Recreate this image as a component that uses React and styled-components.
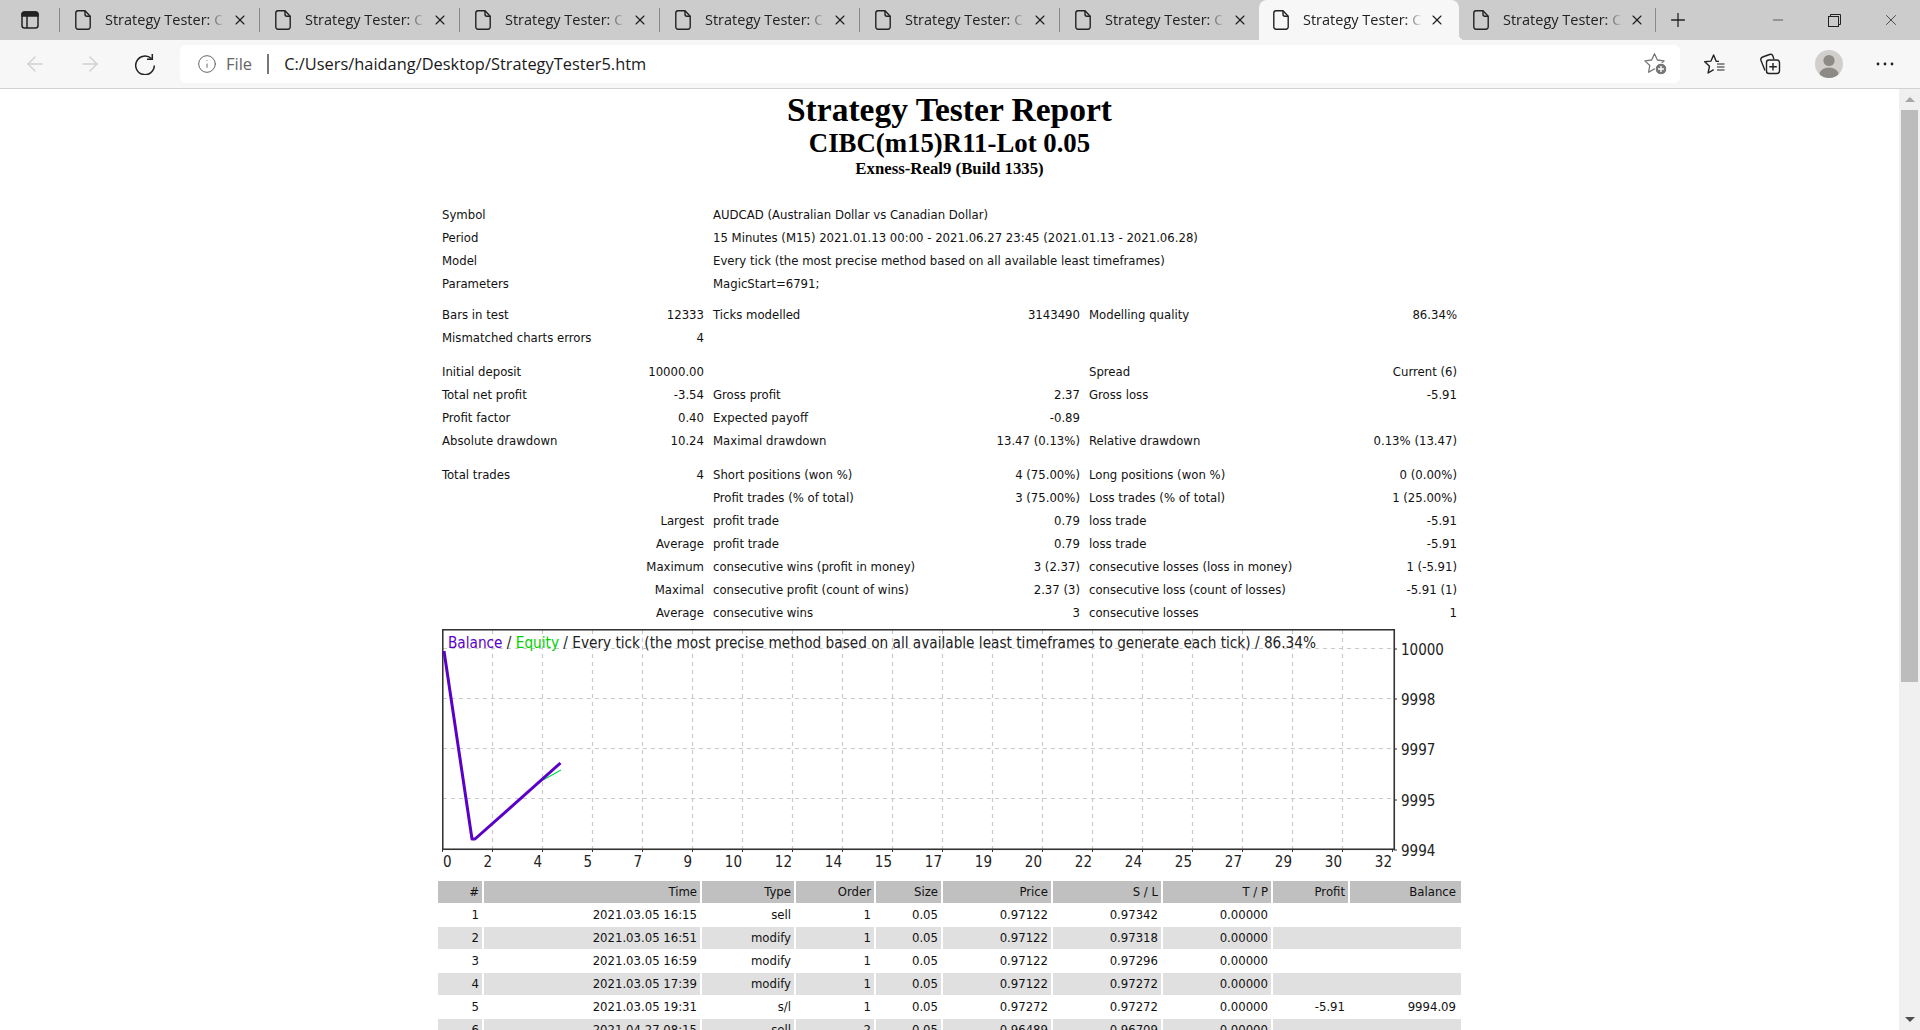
import styled, { createGlobalStyle } from "styled-components";
import { ArrowLeft, ArrowRight, Info, Minus, Plus, X } from "lucide-react";

const GlobalStyle = createGlobalStyle`
  html, body {
    margin: 0;
    padding: 0;
    height: 100%;
    overflow: hidden;
    background: #fff;
  }
`;

const uiFont = `"Open Sans", "Noto Sans", sans-serif`;
const reportFont = `"DejaVu Sans", sans-serif`;

/* ---------- browser chrome ---------- */

const Browser = styled.div`
  display: flex;
  flex-direction: column;
  height: 100vh;
  overflow: hidden;
`;

const TabStrip = styled.div`
  display: flex;
  align-items: stretch;
  height: 40px;
  background: #cccccc;
  flex-shrink: 0;
`;

const StripButton = styled.div`
  display: flex;
  align-items: center;
  justify-content: center;
  width: ${({ $w }) => $w}px;
  flex-shrink: 0;
  color: #222;
`;

const Spacer = styled.div`
  flex: 1;
`;

const Tab = styled.div`
  position: relative;
  display: flex;
  align-items: center;
  width: ${({ $last }) => ($last ? 196 : 200)}px;
  padding-left: ${({ $tight }) => ($tight ? 14 : 16)}px;
  box-sizing: border-box;
  flex-shrink: 0;
  background: ${({ $active }) => ($active ? "#f7f7f7" : "transparent")};
  border-radius: ${({ $active }) => ($active ? "8px 8px 0 0" : "0")};

  &::before {
    content: "";
    display: ${({ $noSep }) => ($noSep ? "none" : "block")};
    position: absolute;
    left: 0;
    top: 8px;
    bottom: 8px;
    width: 1px;
    background: #8a8a8a;
  }

  &::after {
    content: "";
    display: ${({ $active }) => ($active ? "block" : "none")};
    position: absolute;
    right: -6px;
    bottom: 0;
    width: 6px;
    height: 6px;
    background: radial-gradient(circle at 100% 0, transparent 6px, #f7f7f7 6.5px);
  }
`;

const TabTitle = styled.span`
  width: 119px;
  margin-left: 14px;
  padding-bottom: 2px;
  font: 14.5px ${uiFont};
  color: #222;
  white-space: nowrap;
  -webkit-mask-image: linear-gradient(to right, #000 86%, transparent 100%);
  mask-image: linear-gradient(to right, #000 86%, transparent 100%);
`;

const TabClose = styled.span`
  display: flex;
  margin-left: ${({ $tight }) => ($tight ? 7 : 8)}px;
  color: #1c1c1c;
`;

const EndLine = styled.div`
  width: 1px;
  margin: 8px 0;
  background: #8a8a8a;
`;

const Toolbar = styled.div`
  display: flex;
  align-items: center;
  height: 48px;
  padding-left: 7px;
  background: #f7f7f7;
  border-bottom: 1px solid #d2d2d2;
  flex-shrink: 0;
`;

const ToolButton = styled.div`
  display: flex;
  align-items: center;
  justify-content: center;
  width: 55px;
  height: 40px;
  flex-shrink: 0;
  margin-left: ${({ $shift }) => $shift || 0}px;
  color: ${({ $off }) => ($off ? "#cfcfcf" : "#222")};
`;

const ToolGroup = styled.div`
  display: flex;
  margin-left: 7px;
`;

const AddressBar = styled.div`
  display: flex;
  align-items: center;
  width: 1500px;
  height: 38px;
  margin-left: 8px;
  padding: 0 12px 0 17px;
  box-sizing: border-box;
  background: #fff;
  border-radius: 6px;
  flex-shrink: 0;
`;

const SiteLabel = styled.span`
  margin-left: 9px;
  padding-bottom: 2px;
  font: 16.5px ${uiFont};
  color: #666;
`;

const AddressRule = styled.span`
  width: 2px;
  height: 20px;
  margin: 0 15px 0 15px;
  background: #777;
`;

const Url = styled.span`
  flex: 1;
  padding-bottom: 2px;
  font: 16.4px ${uiFont};
  color: #1a1a1a;
`;

/* ---------- page ---------- */

const Viewport = styled.div`
  display: flex;
  flex: 1;
  min-height: 0;
`;

const Page = styled.div`
  flex: 1;
  min-width: 0;
  overflow: hidden;
  background: #fff;
`;

const Scrollbar = styled.div`
  display: flex;
  flex-direction: column;
  align-items: center;
  width: 21px;
  flex-shrink: 0;
  background: #f0f0f0;
`;

const ScrollArrow = styled.div`
  width: 0;
  height: 0;
  margin-top: ${({ $top }) => ($top ? 8 : 0)}px;
  margin-bottom: ${({ $top }) => ($top ? 0 : 8)}px;
  border-left: 5px solid transparent;
  border-right: 5px solid transparent;
  border-bottom: ${({ $top }) => ($top ? "5px solid #a6a6a6" : "0")};
  border-top: ${({ $top }) => ($top ? "0" : "5px solid #505050")};
`;

const ScrollThumb = styled.div`
  width: 17px;
  height: 572px;
  margin-top: 8px;
  background: #bcbcbc;
`;

const Report = styled.div`
  width: 1023px;
  margin: 0 auto;
  font: 13px ${reportFont};
  font-stretch: condensed;
  color: #111;
`;

const Headings = styled.div`
  padding-top: 2px;
  text-align: center;
  font-family: "Liberation Serif", serif;
  font-weight: bold;
  color: #000;
`;

const Heading = styled.div`
  font-size: ${({ $size }) => $size}px;
  line-height: ${({ $line }) => $line}px;
`;

const Stats = styled.div`
  padding: 0 4px;
  margin-top: 24px;
`;

const StatRow = styled.div`
  display: grid;
  grid-template-columns: 262px 367px 368px;
  column-gap: 9px;
  height: 23px;
  line-height: 23px;
  margin-top: ${({ $gap }) => $gap || 0}px;
`;

const Pair = styled.div`
  display: flex;
  justify-content: space-between;
  white-space: nowrap;
  grid-column: ${({ $span }) => ($span ? "span 2" : "auto")};
`;

const ChartFrame = styled.svg`
  display: block;
  margin: 5px 0 6px 4px;
  font-family: ${reportFont};
  font-stretch: condensed;
`;

const Orders = styled.div`
  display: flex;
  flex-direction: column;
  row-gap: 1px;
`;

const OrderRow = styled.div`
  display: grid;
  grid-template-columns: 44px 216px 92px 78px 65px 108px 108px 108px 75px 111px;
  column-gap: 2px;
  height: 22px;
`;

const OrderCell = styled.div`
  grid-column: ${({ $span }) => ($span ? "span 2" : "auto")};
  padding-right: ${({ $edge }) => ($edge ? 5 : 3)}px;
  line-height: 22px;
  text-align: right;
  white-space: nowrap;
  background: ${({ $tone }) => $tone};
`;

/* ---------- icons ---------- */

const TabsMenuIcon = () => (
  <svg width="18" height="18" viewBox="0 0 18 18" fill="none" stroke="#222" strokeWidth="1.5">
    <rect x="1" y="1" width="16" height="16" rx="2.5" />
    <path d="M1 5h16V3.5A2.5 2.5 0 0 0 14.5 1h-11A2.5 2.5 0 0 0 1 3.5z" fill="#222" />
    <path d="M6 5v12" />
  </svg>
);

const FileIcon = () => (
  <svg width="16" height="20" viewBox="0 0 16 20" fill="none" stroke="#222" strokeWidth="1.4" strokeLinejoin="round">
    <path d="M3 .8h7l5.2 5.4V17a2.2 2.2 0 0 1-2.2 2.2H3A2.2 2.2 0 0 1 .8 17V3A2.2 2.2 0 0 1 3 .8z" />
    <path d="M10 .8v3.4a2 2 0 0 0 2 2h3.2" />
  </svg>
);

const ReloadIcon = () => (
  <svg width="22" height="22" viewBox="0 0 22 22" fill="none" stroke="#222" strokeWidth="1.5">
    <path d="M17.4 5.6A9.3 9.3 0 1 0 20.3 12.5" />
    <path d="M18.3 1v5.3h-5.3" />
  </svg>
);

const StarAddIcon = () => (
  <svg width="24" height="24" viewBox="0 0 24 24" fill="none">
    <path
      d="M10.5 1.8l2.9 6.2 6.7.9-4.9 4.6 1.2 6.7-5.9-3.3-5.9 3.3 1.2-6.7L.9 8.9l6.7-.9z"
      stroke="#777"
      strokeWidth="1.3"
      strokeLinejoin="round"
    />
    <circle cx="17" cy="17" r="5.8" fill="#777" stroke="#fff" strokeWidth="1" />
    <path d="M17 14v6M14 17h6" stroke="#fff" strokeWidth="1.4" />
  </svg>
);

const FavoritesIcon = () => (
  <svg width="22" height="22" viewBox="0 0 22 22" fill="none" stroke="#222" strokeWidth="1.4" strokeLinejoin="round">
    <path d="M15 8.4h-2.7L9.6 1.9 7 8.1l-6.3.7 4.8 4.4-1.4 6.8 5.6-3.3" />
    <path d="M13 11h7.5M13 14h7.5M13 17h7.5" strokeWidth="1.1" />
  </svg>
);

const CollectionsIcon = () => (
  <svg width="22" height="22" viewBox="0 0 22 22" fill="none" stroke="#222" strokeWidth="1.4">
    <path d="M6 17.5 2 7.5A2.6 2.6 0 0 1 3.6 4l7-2.5a2.6 2.6 0 0 1 3.3 1.6l1 3" />
    <rect x="7.5" y="7" width="13" height="13.5" rx="2.5" />
    <path d="M14 10v7.5M10.3 13.7h7.5" />
  </svg>
);

const AvatarIcon = () => (
  <svg width="28" height="28" viewBox="0 0 28 28">
    <clipPath id="avatar-clip">
      <circle cx="14" cy="14" r="14" />
    </clipPath>
    <circle cx="14" cy="14" r="14" fill="#d1cfcb" />
    <circle cx="14" cy="10.5" r="5.6" fill="#8d8985" />
    <ellipse cx="14" cy="24.5" rx="9.5" ry="7" fill="#8d8985" clipPath="url(#avatar-clip)" />
  </svg>
);

const MoreIcon = () => (
  <svg width="18" height="4" viewBox="0 0 18 4" fill="#222">
    <circle cx="2" cy="2" r="1.4" />
    <circle cx="9" cy="2" r="1.4" />
    <circle cx="16" cy="2" r="1.4" />
  </svg>
);

const RestoreIcon = () => (
  <svg width="13" height="13" viewBox="0 0 13 13" fill="none" stroke="#222" strokeWidth="1">
    <rect x=".5" y="2.5" width="10" height="10" />
    <path d="M2.5 2.5v-2h10v10h-2" />
  </svg>
);

/* ---------- data ---------- */

const statSections = [
  {
    gap: 0,
    rows: [
      [["Symbol", ""], ["AUDCAD (Australian Dollar vs Canadian Dollar)", "", true]],
      [["Period", ""], ["15 Minutes (M15) 2021.01.13 00:00 - 2021.06.27 23:45 (2021.01.13 - 2021.06.28)", "", true]],
      [["Model", ""], ["Every tick (the most precise method based on all available least timeframes)", "", true]],
      [["Parameters", ""], ["MagicStart=6791;", "", true]],
    ],
  },
  {
    gap: 8,
    rows: [
      [["Bars in test", "12333"], ["Ticks modelled", "3143490"], ["Modelling quality", "86.34%"]],
      [["Mismatched charts errors", "4"]],
    ],
  },
  {
    gap: 11,
    rows: [
      [["Initial deposit", "10000.00"], ["", ""], ["Spread", "Current (6)"]],
      [["Total net profit", "-3.54"], ["Gross profit", "2.37"], ["Gross loss", "-5.91"]],
      [["Profit factor", "0.40"], ["Expected payoff", "-0.89"]],
      [["Absolute drawdown", "10.24"], ["Maximal drawdown", "13.47 (0.13%)"], ["Relative drawdown", "0.13% (13.47)"]],
    ],
  },
  {
    gap: 11,
    rows: [
      [["Total trades", "4"], ["Short positions (won %)", "4 (75.00%)"], ["Long positions (won %)", "0 (0.00%)"]],
      [["", ""], ["Profit trades (% of total)", "3 (75.00%)"], ["Loss trades (% of total)", "1 (25.00%)"]],
      [["", "Largest"], ["profit trade", "0.79"], ["loss trade", "-5.91"]],
      [["", "Average"], ["profit trade", "0.79"], ["loss trade", "-5.91"]],
      [["", "Maximum"], ["consecutive wins (profit in money)", "3 (2.37)"], ["consecutive losses (loss in money)", "1 (-5.91)"]],
      [["", "Maximal"], ["consecutive profit (count of wins)", "2.37 (3)"], ["consecutive loss (count of losses)", "-5.91 (1)"]],
      [["", "Average"], ["consecutive wins", "3"], ["consecutive losses", "1"]],
    ],
  },
];

const orderHead = ["#", "Time", "Type", "Order", "Size", "Price", "S / L", "T / P", "Profit", "Balance"];

const orders = [
  ["1", "2021.03.05 16:15", "sell", "1", "0.05", "0.97122", "0.97342", "0.00000"],
  ["2", "2021.03.05 16:51", "modify", "1", "0.05", "0.97122", "0.97318", "0.00000"],
  ["3", "2021.03.05 16:59", "modify", "1", "0.05", "0.97122", "0.97296", "0.00000"],
  ["4", "2021.03.05 17:39", "modify", "1", "0.05", "0.97122", "0.97272", "0.00000"],
  ["5", "2021.03.05 19:31", "s/l", "1", "0.05", "0.97272", "0.97272", "0.00000", "-5.91", "9994.09"],
  ["6", "2021.04.27 08:15", "sell", "2", "0.05", "0.96489", "0.96709", "0.00000"],
];

const xLabels = [0, 2, 4, 5, 7, 9, 10, 12, 14, 15, 17, 19, 20, 22, 24, 25, 27, 29, 30, 32];
const yLabels = [
  ["10000", 20],
  ["9998", 70],
  ["9997", 120],
  ["9995", 171],
  ["9994", 221],
];

const Chart = () => (
  <ChartFrame width="1019" height="246" viewBox="0 0 1019 246">
    {xLabels.slice(1, 19).map((_, i) => (
      <path
        key={i}
        d={`M${50 * (i + 1) + 0.5} 1V220`}
        stroke="#c9c9c9"
        strokeWidth="1.2"
        strokeDasharray="4 4"
      />
    ))}
    {[19, 69, 119, 169].map((y) => (
      <path key={y} d={`M1 ${y + 0.5}H952`} stroke="#c9c9c9" strokeWidth="1.2" strokeDasharray="4 4" />
    ))}
    <rect x="0.75" y="0.75" width="951.5" height="219.5" fill="none" stroke="#333" strokeWidth="1.6" />
    {xLabels.map((_, i) => (
      <path key={i} d={`M${50 * i + 0.5} 220v3`} stroke="#333" />
    ))}
    {yLabels.map(([, y]) => (
      <path key={y} d={`M952 ${y}h3`} stroke="#333" />
    ))}
    <path d="M101 151L119 141" fill="none" stroke="#00e050" strokeWidth="1.2" />
    <path d="M2 22 L30 210 L33 210 L118.5 134" fill="none" stroke="#5a00c8" strokeWidth="3" strokeLinejoin="round" />
    <text x="6" y="18.5" fontSize="15.2" fill="#222">
      <tspan fill="#5a00c8">Balance</tspan> / <tspan fill="#00d000">Equity</tspan> / Every tick (the most
      precise method based on all available least timeframes to generate each tick) / 86.34%
    </text>
    {xLabels.map((label, i) => (
      <text
        key={i}
        x={i === 0 ? 1 : 50 * i}
        y="238"
        fontSize="15"
        fill="#222"
        textAnchor={i === 0 ? "start" : "end"}
      >
        {label}
      </text>
    ))}
    {yLabels.map(([label, y]) => (
      <text key={label} x="959" y={y + 6} fontSize="15" fill="#222">
        {label}
      </text>
    ))}
  </ChartFrame>
);

const tabs = [0, 1, 2, 3, 4, 5, 6, 7];

export default function App() {
  return (
    <Browser>
      <GlobalStyle />
      <TabStrip>
        <StripButton $w={59}>
          <TabsMenuIcon />
        </StripButton>
        {tabs.map((i) => (
          <Tab key={i} $active={i === 6} $noSep={i === 6 || i === 7} $tight={i >= 6} $last={i === 7}>
            <FileIcon />
            <TabTitle>Strategy Tester: CI</TabTitle>
            <TabClose $tight={i >= 6}>
              <X size={16} strokeWidth={1.6} />
            </TabClose>
          </Tab>
        ))}
        <EndLine />
        <StripButton $w={44}>
          <Plus size={22} strokeWidth={1.4} />
        </StripButton>
        <Spacer />
        <StripButton $w={56}>
          <Minus size={16} strokeWidth={1} />
        </StripButton>
        <StripButton $w={56}>
          <RestoreIcon />
        </StripButton>
        <StripButton $w={58}>
          <X size={18} strokeWidth={1} />
        </StripButton>
      </TabStrip>

      <Toolbar>
        <ToolButton $off>
          <ArrowLeft size={24} strokeWidth={1.4} />
        </ToolButton>
        <ToolButton $off>
          <ArrowRight size={24} strokeWidth={1.4} />
        </ToolButton>
        <ToolButton>
          <ReloadIcon />
        </ToolButton>
        <AddressBar>
          <Info size={20} strokeWidth={1.2} color="#666" />
          <SiteLabel>File</SiteLabel>
          <AddressRule />
          <Url>C:/Users/haidang/Desktop/StrategyTester5.htm</Url>
          <StarAddIcon />
        </AddressBar>
        <ToolGroup>
          <ToolButton>
            <FavoritesIcon />
          </ToolButton>
          <ToolButton>
            <CollectionsIcon />
          </ToolButton>
          <ToolButton $shift={4}>
            <AvatarIcon />
          </ToolButton>
          <ToolButton $shift={1}>
            <MoreIcon />
          </ToolButton>
        </ToolGroup>
      </Toolbar>

      <Viewport>
        <Page>
          <Report>
            <Headings>
              <Heading $size={33.5} $line={37}>
                Strategy Tester Report
              </Heading>
              <Heading $size={26.8} $line={31}>
                CIBC(m15)R11-Lot 0.05
              </Heading>
              <Heading $size={16.8} $line={20}>
                Exness-Real9 (Build 1335)
              </Heading>
            </Headings>

            <Stats>
              {statSections.map((section, s) =>
                section.rows.map((row, r) => (
                  <StatRow key={`${s}-${r}`} $gap={r === 0 ? section.gap : 0}>
                    {row.map(([label, value, span], c) => (
                      <Pair key={c} $span={span}>
                        <span>{label}</span>
                        <span>{value}</span>
                      </Pair>
                    ))}
                  </StatRow>
                ))
              )}
            </Stats>

            <Chart />

            <Orders>
              <OrderRow>
                {orderHead.map((h, c) => (
                  <OrderCell key={h} $tone="#c0c0c0" $edge={c === 9}>
                    {h}
                  </OrderCell>
                ))}
              </OrderRow>
              {orders.map((row, i) => (
                <OrderRow key={row[0]}>
                  {row.map((cell, c) => (
                    <OrderCell key={c} $tone={i % 2 ? "#e0e0e0" : "#fff"} $edge={c === 9}>
                      {cell}
                    </OrderCell>
                  ))}
                  {row.length === 8 && <OrderCell $span $tone={i % 2 ? "#e0e0e0" : "#fff"} />}
                </OrderRow>
              ))}
            </Orders>
          </Report>
        </Page>
        <Scrollbar>
          <ScrollArrow $top />
          <ScrollThumb />
          <Spacer />
          <ScrollArrow />
        </Scrollbar>
      </Viewport>
    </Browser>
  );
}
